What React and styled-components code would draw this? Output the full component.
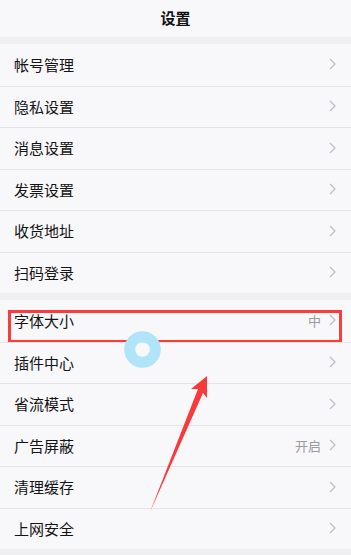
import React from "react";
import styled, { createGlobalStyle } from "styled-components";

const GlobalStyle = createGlobalStyle`
  html, body {
    margin: 0;
    padding: 0;
    background: #efeef1;
  }
  body {
    font-family: "Noto Sans CJK SC", "Noto Sans", sans-serif;
  }
`;

const groups = [
  [
    { title: "帐号管理" },
    { title: "隐私设置" },
    { title: "消息设置" },
    { title: "发票设置" },
    { title: "收货地址" },
    { title: "扫码登录" },
  ],
  [
    { title: "字体大小", value: "中", marked: true },
    { title: "插件中心" },
    { title: "省流模式" },
    { title: "广告屏蔽", value: "开启" },
    { title: "清理缓存" },
    { title: "上网安全" },
  ],
];

function Chevron() {
  return (
    <svg width="7" height="12" viewBox="0 0 7 12">
      <path d="M1 1 L6 6 L1 11" fill="none" stroke="#bdbcc0" strokeWidth="1.2" />
    </svg>
  );
}

export default function App() {
  return (
    <Page>
      <GlobalStyle />
      <Header>设置</Header>
      {groups.map((rows, gi) => (
        <Group key={gi}>
          {rows.map((r) => (
            <Row key={r.title} marked={r.marked ? 1 : 0}>
              <Title>{r.title}</Title>
              {r.value && <Value>{r.value}</Value>}
              <Chevron />
            </Row>
          ))}
        </Group>
      ))}
      <Overlay width="351" height="555" viewBox="0 0 351 555">
        <circle cx="142.5" cy="349.5" r="12.8" fill="none" stroke="#b0e5f9" strokeWidth="11" />
        <polygon
          points="207,376 191,389 198,389 150,512 203,393 207,398"
          fill="#f93a3a"
        />
      </Overlay>
    </Page>
  );
}

const Page = styled.div`
  position: relative;
  width: 351px;
  height: 555px;
  overflow: hidden;
  background: #efeef1;
`;

const Header = styled.div`
  height: 37px;
  padding-bottom: 3px;
  box-sizing: border-box;
  display: flex;
  align-items: center;
  justify-content: center;
  background: #f8f7fa;
  font-size: 15px;
  font-weight: 700;
  color: #111;
`;

const Group = styled.div`
  margin-top: 7px;
  background: #f8f7fa;
`;

const Row = styled.div`
  position: relative;
  height: 41.5px;
  display: flex;
  align-items: center;
  padding: 0 15px 1px 14px;
  box-sizing: border-box;
  gap: 8px;

  & + & {
    border-top: 1px solid #e4e3e6;
  }

  ${({ marked }) =>
    marked &&
    `
    &::after {
      content: "";
      position: absolute;
      top: 10px;
      left: 8px;
      right: 9px;
      bottom: -1px;
      border: 3px solid #fb3c3c;
      pointer-events: none;
    }
  `}
`;

const Title = styled.span`
  flex: 1;
  font-size: 15px;
  color: #141414;
`;

const Value = styled.span`
  font-size: 13px;
  color: #9c9b9f;
`;

const Overlay = styled.svg`
  position: absolute;
  top: 0;
  left: 0;
  pointer-events: none;
`;
